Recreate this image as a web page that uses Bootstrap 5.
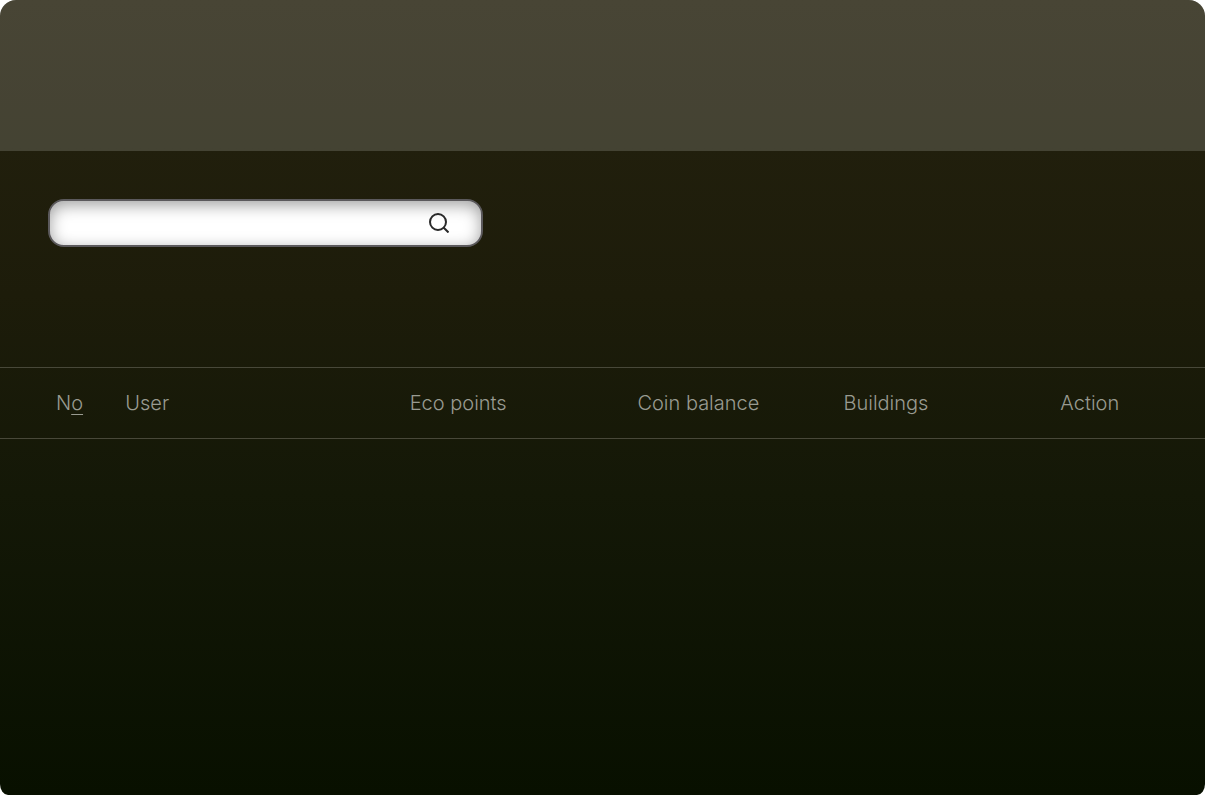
<!DOCTYPE html>
<html lang="en">
<head>
<meta charset="utf-8">
<meta name="viewport" content="width=device-width, initial-scale=1">
<title>Users</title>
<link rel="stylesheet" href="https://cdn.jsdelivr.net/npm/bootstrap@5.3.0/dist/css/bootstrap.min.css">
<style>
body { font-family: Inter, sans-serif; background: #fff; }
.panel { border-radius: 16px 16px 8px 8px / 16px 16px 11px 11px; background: linear-gradient(#25220f, #1d1c0a 37%, #141807 62%, #081000); }
.top-bar { height: 151px; background: rgba(255, 255, 255, .16); }
.search-area { padding: 48px 48px 120px; }
.search-box { width: 435px; height: 48px; padding: 0 32px 0 16px; background: #fff; border: 2px solid #5b595c; border-radius: 16px; box-shadow: inset 0 4px 16px rgba(0, 0, 0, .38); }
.search-box input { outline: 0; }
.user-table { table-layout: fixed; border-top: 1px solid #484839; border-bottom: 1px solid #484839; }
.user-table th { height: 71px; padding: 0; font-size: 20px; line-height: 24px; font-weight: 300; color: #999b91; }
.user-table th:first-child { padding-left: 56px; }
.user-table u { text-underline-offset: 4px; text-decoration-thickness: 1px; }
</style>
</head>
<body>
<main class="panel min-vh-100 overflow-hidden">
  <header class="top-bar"></header>
  <div class="search-area">
    <form class="search-box d-flex align-items-center mw-100" role="search">
      <input class="flex-grow-1 border-0 bg-transparent" type="search" aria-label="Search users">
      <button class="btn p-0 border-0 d-flex" type="submit" aria-label="Search">
        <svg width="20" height="20" viewBox="0 0 20 20" fill="none" stroke="#292929" stroke-width="2"><circle cx="9" cy="9" r="8"/><path d="M14.5 14.5l5 5"/></svg>
      </button>
    </form>
  </div>
  <table class="user-table w-100">
    <colgroup><col style="width:10.4%"><col style="width:23.6%"><col style="width:18.9%"><col style="width:17.1%"><col style="width:18%"><col></colgroup>
    <thead><tr><th>N<u>o</u></th><th>User</th><th>Eco points</th><th>Coin balance</th><th>Buildings</th><th>Action</th></tr></thead>
  </table>
</main>
<script src="https://cdn.jsdelivr.net/npm/bootstrap@5.3.0/dist/js/bootstrap.bundle.min.js"></script>
</body>
</html>
